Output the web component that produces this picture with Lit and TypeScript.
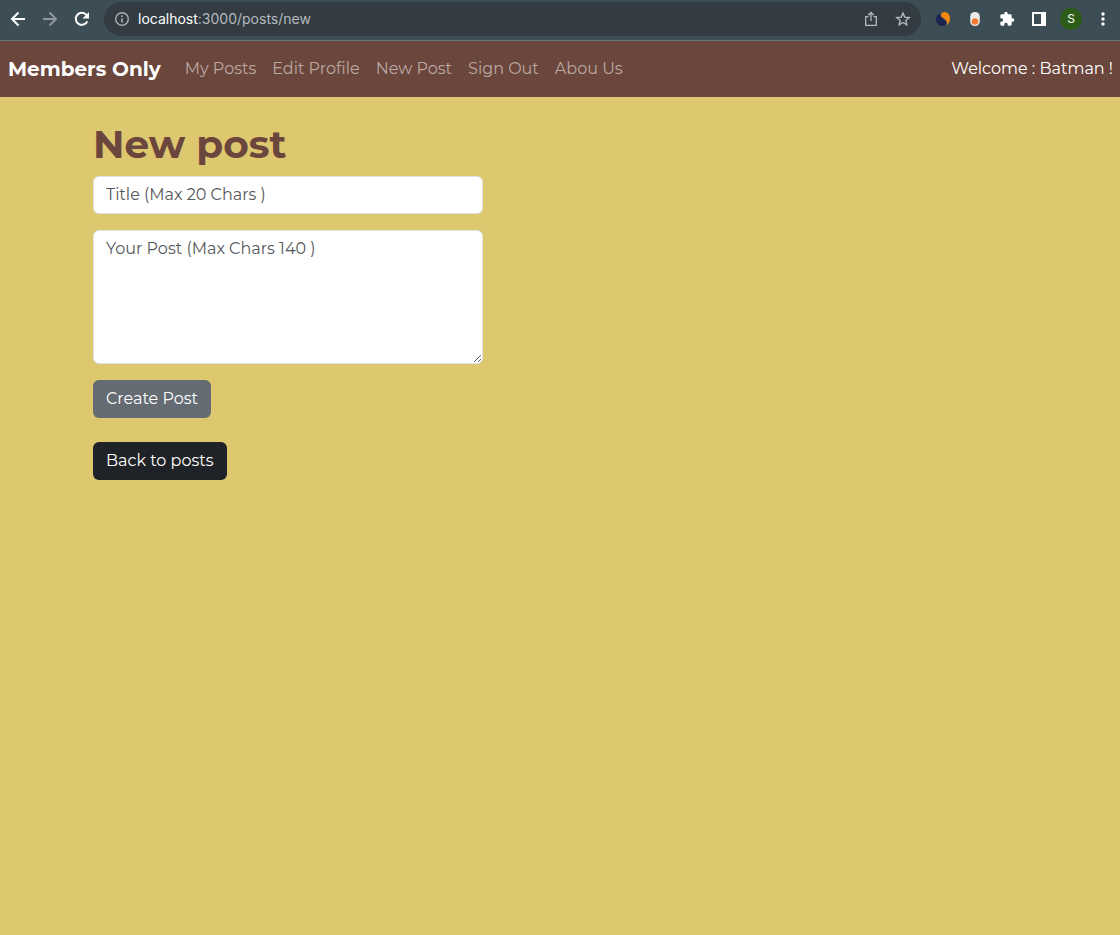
import { LitElement, html, css } from "lit";
import { customElement } from "lit/decorators.js";

@customElement("browser-bar")
class BrowserBar extends LitElement {
  static styles = css`
    :host {
      display: flex;
      align-items: center;
      box-sizing: border-box;
      height: 41px;
      padding: 0 8px 2px;
      background: #3d4d55;
      border-bottom: 1px solid #62747c;
      font-family: Inter, Roboto, sans-serif;
      font-size: 14px;
      color: #fff;
    }
    svg {
      display: block;
    }
    .icon {
      display: flex;
      align-items: center;
      justify-content: center;
      width: 32px;
      height: 32px;
      padding: 0;
      border: 0;
      background: none;
      color: inherit;
      font: inherit;
    }
    .nav {
      display: flex;
      gap: 12px;
      margin-right: 12px;
    }
    .nav .icon {
      width: 20px;
    }
    .dim {
      color: #8e989d;
    }
    .address {
      display: flex;
      flex: 1;
      align-items: center;
      height: 34px;
      padding: 0 2px 0 10px;
      border-radius: 17px;
      background: #323c42;
      color: #b5babd;
    }
    .url {
      flex: 1;
      padding-left: 8px;
      line-height: 20px;
    }
    .host {
      color: #fff;
    }
    .extensions {
      display: flex;
      margin-left: 6px;
      margin-right: -7px;
    }
    .avatar {
      width: 22px;
      height: 22px;
      border-radius: 11px;
      background: #2b5d19;
      font-size: 12px;
      line-height: 22px;
      text-align: center;
    }
  `;

  render() {
    return html`
      <div class="nav">
        <button class="icon" aria-label="Back">
          <svg width="16" height="16" viewBox="0 0 16 16" fill="none" stroke="currentColor" stroke-width="2"><path d="M15 8H2.5M8.5 1.5 2 8l6.500 6.500" /></svg>
        </button>
        <button class="icon dim" aria-label="Forward">
          <svg width="16" height="16" viewBox="0 0 16 16" fill="none" stroke="currentColor" stroke-width="2"><path d="M1 8h12.500M7.500 1.500 14 8l-6.500 6.500" /></svg>
        </button>
        <button class="icon" aria-label="Reload">
          <svg width="16" height="16" viewBox="0 0 16 16"><path d="M13.300 10.300A6 6 0 1 1 12.500 4" fill="none" stroke="currentColor" stroke-width="2" /><path d="M15 1v6.500H8.500z" fill="currentColor" /></svg>
        </button>
      </div>
      <div class="address">
        <svg width="16" height="16" viewBox="0 0 16 16" fill="none" stroke="#aab0b4"><circle cx="8" cy="8" r="6.300" stroke-width="1.400" /><path d="M8 7.200v4.300M8 4.300v1.700" stroke-width="1.600" /></svg>
        <span class="url"><span class="host">localhost</span>:3000/posts/new</span>
        <button class="icon" aria-label="Share">
          <svg width="16" height="16" viewBox="0 0 16 16" fill="none" stroke="currentColor" stroke-width="1.300"><path d="M5.500 5.600H2.700v8.700h10.600V5.600h-2.800M8 10V2M5.200 4.300 8 1.500l2.800 2.800" /></svg>
        </button>
        <button class="icon" aria-label="Bookmark">
          <svg width="16" height="16" viewBox="0 0 16 16" fill="none" stroke="currentColor" stroke-width="1.400"><path d="m8 2 1.700 4.100 4.500.4-3.400 2.900 1 4.400L8 11.500l-3.800 2.300 1-4.400-3.400-2.900 4.500-.4z" /></svg>
        </button>
      </div>
      <div class="extensions">
        <button class="icon" aria-label="Theme extension">
          <svg width="16" height="16" viewBox="0 0 16 16"><path d="M5 2.500C2.500 3.500 1 5.500 1 8.500 1 12.200 4 15 7.500 15c2.300 0 3.700-1.300 3.700-3.200C11.200 8.500 5 7.500 5 2.500z" fill="#1b2351" /><path d="M9.500 1C13 1.300 15 4 15 7.500c0 3-1.300 5.500-3.300 6.700.9-2.800.2-4.500-1.700-6C8 6.800 6 6.500 6 4.200 6 2.200 7.500 1 9.500 1z" fill="#f5870f" /></svg>
        </button>
        <button class="icon" aria-label="Toggle extension">
          <svg width="16" height="16" viewBox="0 0 16 16"><rect x="3.200" y="1" width="9.600" height="14" rx="4.500" fill="#e9eaea" /><circle cx="8" cy="10.500" r="3.300" fill="#f37a35" /></svg>
        </button>
        <button class="icon" aria-label="Extensions">
          <svg width="16" height="16" viewBox="0 0 24 24" fill="currentColor"><path d="M20.500 11H19V7a2 2 0 0 0-2-2h-4V3.500a2.500 2.500 0 0 0-5 0V5H4a2 2 0 0 0-2 2v3.800h1.500a2.700 2.700 0 0 1 0 5.400H2V20a2 2 0 0 0 2 2h3.800v-1.500a2.700 2.700 0 0 1 5.400 0V22H17a2 2 0 0 0 2-2v-4h1.500a2.500 2.500 0 0 0 0-5z" /></svg>
        </button>
        <button class="icon" aria-label="Side panel">
          <svg width="16" height="16" viewBox="0 0 16 16"><path d="M1 1h14v14H1zM3 3v10h7V3z" fill="currentColor" fill-rule="evenodd" /></svg>
        </button>
        <button class="icon" aria-label="Profile"><span class="avatar">S</span></button>
        <button class="icon" aria-label="Menu">
          <svg width="16" height="16" viewBox="0 0 16 16" fill="currentColor"><circle cx="8" cy="3" r="1.700" /><circle cx="8" cy="8" r="1.700" /><circle cx="8" cy="13" r="1.700" /></svg>
        </button>
      </div>
    `;
  }
}

@customElement("app-root")
class AppRoot extends LitElement {
  static styles = css`
    :host {
      display: block;
      min-height: 100vh;
      background: #ddc86f;
      font-family: Montserrat, Inter, sans-serif;
      font-size: 16px;
      line-height: 24px;
    }
    .navbar {
      display: flex;
      align-items: center;
      box-sizing: border-box;
      min-height: 56px;
      padding: 8px 7px 8px 8px;
      background: #6b463c;
      color: #fff;
    }
    a {
      text-decoration: none;
    }
    .brand {
      margin-right: 16px;
      color: #fff;
      font-size: 20px;
      font-weight: 700;
      line-height: 30px;
    }
    .links {
      display: flex;
      flex: 1;
      margin: 0;
      padding: 0;
      list-style: none;
    }
    .links a {
      display: block;
      padding: 8px;
      color: #baa8a3;
    }
    main {
      box-sizing: border-box;
      max-width: 960px;
      margin: 0 auto;
      padding: 24px 13px;
    }
    h1 {
      margin: 0 0 8px;
      color: #6b463c;
      font-size: 39px;
      font-weight: 700;
      line-height: 47px;
    }
    form {
      display: flex;
      flex-direction: column;
      align-items: flex-start;
      gap: 16px;
      max-width: 390px;
      margin-bottom: 24px;
    }
    .field {
      display: block;
      box-sizing: border-box;
      width: 100%;
      margin: 0;
      padding: 6px 12px;
      border: 1px solid #dee2e6;
      border-radius: 6px;
      background: #fff;
      color: #212529;
      font: inherit;
    }
    .field::placeholder {
      color: #55585b;
      opacity: 1;
    }
    textarea {
      height: 134px;
      resize: vertical;
    }
    .button {
      display: inline-block;
      box-sizing: border-box;
      padding: 7px 13px;
      border: 0;
      border-radius: 6px;
      color: #fff;
      font: inherit;
    }
    .create {
      background: #646b73;
    }
    .back {
      background: #1f2226;
    }
  `;

  links = ["My Posts", "Edit Profile", "New Post", "Sign Out", "Abou Us"];

  render() {
    return html`
      <browser-bar></browser-bar>
      <nav class="navbar">
        <a class="brand" href="#">Members Only</a>
        <ul class="links">
          ${this.links.map((label) => html`<li><a href="#">${label}</a></li>`)}
        </ul>
        <span>Welcome : Batman !</span>
      </nav>
      <main>
        <h1>New post</h1>
        <form @submit=${(e: Event) => e.preventDefault()}>
          <input class="field" type="text" maxlength="20" aria-label="Title" placeholder="Title (Max 20 Chars )" />
          <textarea class="field" maxlength="140" aria-label="Your post" placeholder="Your Post (Max Chars 140 )"></textarea>
          <button class="button create">Create Post</button>
        </form>
        <a class="button back" href="#">Back to posts</a>
      </main>
    `;
  }
}
